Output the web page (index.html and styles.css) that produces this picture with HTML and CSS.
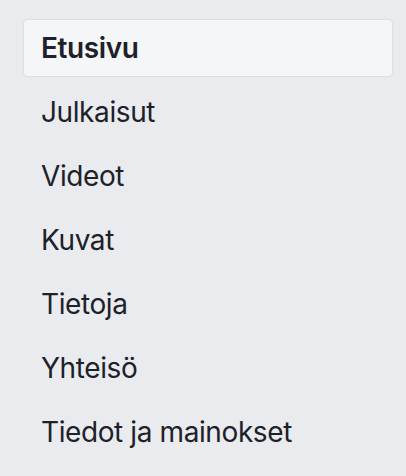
FILE: index.html
```html
<!DOCTYPE html>
<html lang="fi">
<head>
<meta charset="utf-8">
<link rel="stylesheet" href="styles.css">
</head>
<body>
<nav class="menu">
  <a class="item selected" href="#">Etusivu</a>
  <a class="item" href="#">Julkaisut</a>
  <a class="item" href="#">Videot</a>
  <a class="item" href="#">Kuvat</a>
  <a class="item" href="#">Tietoja</a>
  <a class="item" href="#">Yhteisö</a>
  <a class="item" href="#">Tiedot ja mainokset</a>
</nav>
</body>
</html>
```
FILE: styles.css
```css
html, body {
  margin: 0;
  padding: 0;
  background: #e9ebee;
}
body {
  font-family: Inter, "Liberation Sans", Arial, sans-serif;
  color: #1d2129;
}
.menu {
  display: flex;
  flex-direction: column;
  gap: 6px;
  width: 370px;
  padding: 19px 0 0 23px;
}
.item {
  box-sizing: border-box;
  height: 58px;
  display: flex;
  align-items: center;
  padding-left: 17px;
  border: 1px solid transparent;
  border-radius: 4px;
  font-size: 28px;
  letter-spacing: -0.4px;
  color: #1d2129;
  text-decoration: none;
}
.item.selected {
  background: #f5f6f7;
  border-color: #dddfe2;
  font-weight: 600;
}
```
